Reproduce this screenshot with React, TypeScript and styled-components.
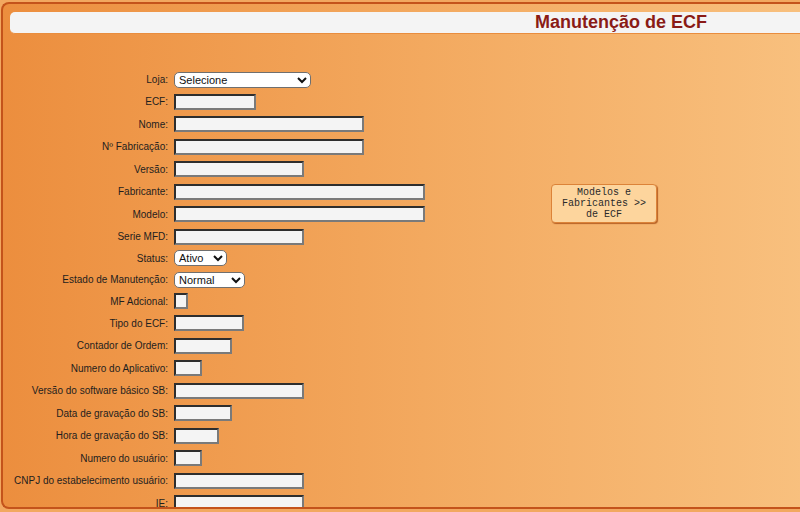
import React from 'react';
import styled, { createGlobalStyle } from 'styled-components';

const GlobalStyle = createGlobalStyle`
  html, body {
    margin:0;
    padding:0;
    overflow:hidden;
    background:#f2a860;
  }
  body {
    font-family:"Liberation Sans", Arial, sans-serif;
  }
`

const Page = styled.div`
  box-sizing:border-box;
  width:799px;
  height:507px;
  margin:2px 0 0 1px;
  border:2px solid #c4531b;
  border-right:none;
  border-radius:8px 0 0 8px;
  background:linear-gradient(to right, #ec8e3e 0px, #f3a95f 420px, #f8c07e 800px);
  overflow:hidden;
`

const TitleBar = styled.div`
  box-sizing:border-box;
  height:22px;
  margin:8px 0 0 7px;
  padding-left:432px;
  background:#f4f4f4;
  border-radius:5px 0 0 5px;
  border-bottom:1px solid #e98d3e;
  text-align:center;
  h1 {
    margin:0;
    font-size:18px;
    line-height:20px;
    font-weight:bold;
    color:#8a1b16;
    white-space:nowrap;
  }
`

const Body = styled.div`
  display:flex;
  align-items:flex-start;
  margin-top:35px;
`

const FormGrid = styled.div`
  display:grid;
  grid-template-columns:156px 260px;
  column-gap:6px;
  margin-left:9px;
`

const Label = styled.label<{ $h: number }>`
  display:flex;
  align-items:center;
  justify-content:flex-end;
  height:${({ $h }) => $h}px;
  font-size:10px;
  color:#1e1e1e;
  white-space:nowrap;
`

const Cell = styled.div<{ $h: number }>`
  display:flex;
  align-items:center;
  height:${({ $h }) => $h}px;
`

const TextInput = styled.input<{ $w: number }>`
  box-sizing:border-box;
  width:${({ $w }) => $w}px;
  height:16px;
  margin:0;
  padding:0 2px;
  border-width:2px;
  border-style:solid;
  border-color:#2e2e2e #7a7a7a #7a7a7a #2e2e2e;
  background:#f4f4f4;
  font-size:11px;
`

const Select = styled.select<{ $w: number }>`
  box-sizing:border-box;
  width:${({ $w }) => $w}px;
  height:16px;
  margin:0;
  padding:0;
  border:1px solid #6f6f6f;
  border-radius:5px;
  background:#ffffff;
  color:#111;
  font-family:"Liberation Sans", Arial, sans-serif;
  font-size:11px;
`

const Check = styled.input`
  appearance:none;
  box-sizing:border-box;
  width:14px;
  height:16px;
  margin:0;
  border-width:2px;
  border-style:solid;
  border-color:#2e2e2e #7a7a7a #7a7a7a #2e2e2e;
  background:#f4f4f4;
`

const Side = styled.div`
  margin:115px 0 0 117px;
`

const ModelButton = styled.button`
  box-sizing:border-box;
  width:106px;
  height:39px;
  padding:0 4px;
  background:#fdd59d;
  border:1px solid #dc8338;
  border-radius:4px;
  box-shadow:1px 1px 1px #b86226;
  font-family:"Liberation Mono", "Courier New", monospace;
  font-size:10px;
  line-height:11px;
  color:#2a2a2a;
  text-align:center;
`

type Field =
  | { label: string; kind: 'text'; w: number; h: number }
  | { label: string; kind: 'select'; w: number; h: number; value: string }
  | { label: string; kind: 'check'; h: number };

const fields: Field[] = [
  { label: 'Loja:', kind: 'select', w: 137, h: 21.5, value: 'Selecione' },
  { label: 'ECF:', kind: 'text', w: 82, h: 22.5 },
  { label: 'Nome:', kind: 'text', w: 190, h: 22.5 },
  { label: 'Nº Fabricação:', kind: 'text', w: 190, h: 22.5 },
  { label: 'Versão:', kind: 'text', w: 130, h: 22.5 },
  { label: 'Fabricante:', kind: 'text', w: 251, h: 22.5 },
  { label: 'Modelo:', kind: 'text', w: 251, h: 22.5 },
  { label: 'Serie MFD:', kind: 'text', w: 130, h: 22 },
  { label: 'Status:', kind: 'select', w: 53, h: 21.5, value: 'Ativo' },
  { label: 'Estado de Manutenção:', kind: 'select', w: 71, h: 21, value: 'Normal' },
  { label: 'MF Adcional:', kind: 'check', h: 22 },
  { label: 'Tipo do ECF:', kind: 'text', w: 70, h: 22.5 },
  { label: 'Contador de Ordem:', kind: 'text', w: 58, h: 22.5 },
  { label: 'Numero do Aplicativo:', kind: 'text', w: 28, h: 22.5 },
  { label: 'Versão do software básico SB:', kind: 'text', w: 130, h: 22.5 },
  { label: 'Data de gravação do SB:', kind: 'text', w: 58, h: 22.5 },
  { label: 'Hora de gravação do SB:', kind: 'text', w: 45, h: 22.5 },
  { label: 'Numero do usuário:', kind: 'text', w: 28, h: 22.5 },
  { label: 'CNPJ do estabelecimento usuário:', kind: 'text', w: 130, h: 22.5 },
  { label: 'IE:', kind: 'text', w: 130, h: 22.5 },
];

const renderControl = (f: Field) => {
  if (f.kind === 'select') {
    return (
      <Select $w={f.w} defaultValue={f.value}>
        <option>{f.value}</option>
      </Select>
    );
  }
  if (f.kind === 'check') return <Check type="checkbox" />;
  return <TextInput type="text" $w={f.w} />;
};

const App = () => {
  return (
    <>
      <GlobalStyle />
      <Page>
        <TitleBar>
          <h1>Manutenção de ECF</h1>
        </TitleBar>
        <Body>
          <FormGrid>
            {fields.map((f) => (
              <React.Fragment key={f.label}>
                <Label $h={f.h}>{f.label}</Label>
                <Cell $h={f.h}>{renderControl(f)}</Cell>
              </React.Fragment>
            ))}
          </FormGrid>
          <Side>
            <ModelButton type="button">Modelos e Fabricantes &gt;&gt; de ECF</ModelButton>
          </Side>
        </Body>
      </Page>
    </>
  );
};

export default App;
